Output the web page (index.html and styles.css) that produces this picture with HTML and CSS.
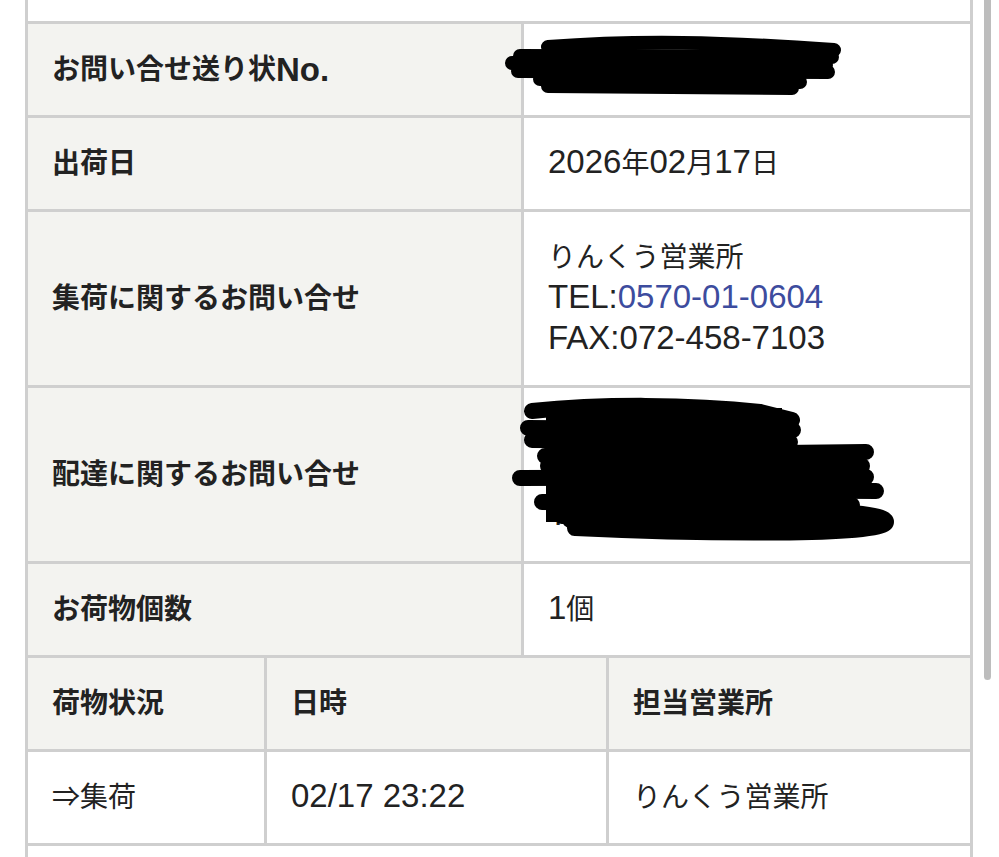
FILE: index.html
```html
<!DOCTYPE html>
<html lang="ja">
<head>
<meta charset="utf-8">
<title>お問い合せ</title>
<link rel="stylesheet" href="styles.css">
</head>
<body>
<div class="page">
  <div class="sheet">
    <div class="row-cut"></div>
    <div class="info">
      <div class="th">お問い合せ送り状<span class="lat">No.</span></div>
      <div class="td redacted">
        <svg class="scribble s1" viewBox="500 34 345 64" width="345" height="64" aria-hidden="true">
          <g fill="none" stroke="#000" stroke-width="14" stroke-linecap="round">
            <path d="M548 47 C 640 40, 720 42, 834 50"/>
            <path d="M520 56 L 832 57"/>
            <path d="M512 63 L 826 65"/>
            <path d="M518 71 L 828 72"/>
            <path d="M540 79 L 800 82"/>
            <path d="M548 86 L 792 88"/>
          </g>
        </svg>
      </div>

      <div class="th">出荷日</div>
      <div class="td"><div><span class="lat">2026</span>年<span class="lat">02</span>月<span class="lat">17</span>日</div></div>

      <div class="th">集荷に関するお問い合せ</div>
      <div class="td">
        <div>りんくう営業所</div>
        <div><span class="lat">TEL:</span><span class="lat tel">0570-01-0604</span></div>
        <div><span class="lat">FAX:072-458-7103</span></div>
      </div>

      <div class="th">配達に関するお問い合せ</div>
      <div class="td redacted">
        <div>○○営業所</div>
        <div><span class="lat">TEL:</span><span class="lat tel">0000-00-0000</span></div>
        <div><span class="lat">T</span></div>
        <svg class="scribble s2" viewBox="505 395 395 150" width="395" height="150" aria-hidden="true">
          <rect x="546" y="408" width="236" height="114" fill="#000"/>
          <g fill="none" stroke="#000" stroke-width="16" stroke-linecap="round">
            <path d="M532 411 C 600 404, 690 404, 760 412 L 792 420"/>
            <path d="M528 428 L 793 430"/>
            <path d="M532 440 L 790 442"/>
            <path d="M545 456 L 866 452"/>
            <path d="M548 466 L 862 466"/>
            <path d="M520 478 L 866 477"/>
            <path d="M560 489 L 876 491"/>
            <path d="M542 502 L 852 505"/>
            <path d="M562 516 C 700 508, 886 506, 886 522 C 886 536, 700 534, 575 528"/>
            <path d="M570 520 L 860 522"/>
          </g>
        </svg>
      </div>

      <div class="th">お荷物個数</div>
      <div class="td"><div><span class="lat">1</span>個</div></div>
    </div>

    <div class="history">
      <div class="th">荷物状況</div>
      <div class="th">日時</div>
      <div class="th">担当営業所</div>

      <div class="td"><div>⇒集荷</div></div>
      <div class="td"><div><span class="lat">02/17 23:22</span></div></div>
      <div class="td"><div>りんくう営業所</div></div>
    </div>

    <div class="tail"></div>
  </div>
</div>
<div class="scrollbar"></div>
</body>
</html>
```

FILE: styles.css
```css
* {
  box-sizing: border-box;
}

html,
body {
  margin: 0;
  padding: 0;
  background: #ffffff;
}

body {
  font-family: "Liberation Sans", "Noto Sans CJK JP", sans-serif;
  font-size: 28px;
  line-height: 41px;
  color: #222222;
  overflow: hidden;
}

.page {
  height: 857px;
  padding-left: 25px;
  overflow: hidden;
}

.sheet {
  width: 948px;
  background: #cfcfcf;
  padding: 0 3px;
  display: flex;
  flex-direction: column;
  gap: 3px;
}

.row-cut {
  height: 21px;
  background: #ffffff;
}

.info {
  display: grid;
  grid-template-columns: 493px 446px;
  gap: 3px;
}

.history {
  display: grid;
  grid-template-columns: 236px 339px 361px;
  gap: 3px;
}

.th,
.td {
  padding: 25px 0 25px 24px;
  min-height: 91px;
}

.th {
  background: #f3f3f0;
  font-weight: bold;
  display: flex;
  align-items: center;
}

.td {
  background: #ffffff;
  display: flex;
  flex-direction: column;
  justify-content: center;
}

.lat {
  font-family: "Liberation Sans", sans-serif;
  font-size: 33px;
  line-height: 36px;
}

.tel {
  color: #3d4c9e;
}

.redacted {
  position: relative;
}

.scribble {
  position: absolute;
  display: block;
}

.s1 {
  left: -24px;
  top: 10px;
}

.s2 {
  left: -19px;
  top: 7px;
}

.tail {
  height: 40px;
  background: #ffffff;
}

.scrollbar {
  position: fixed;
  top: -10px;
  right: 8px;
  width: 7px;
  height: 690px;
  border-radius: 4px;
  background: #bdbdbd;
}
```
